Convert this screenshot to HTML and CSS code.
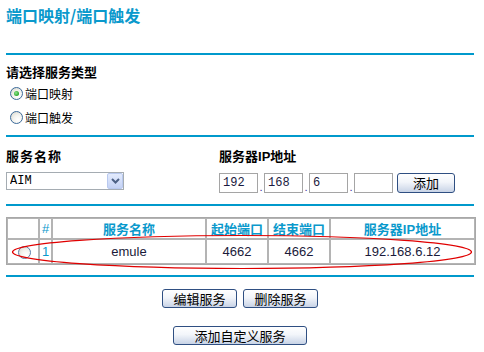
FILE: index.html
```html
<!DOCTYPE html>
<html lang="zh-CN">
<head>
    <meta charset="UTF-8">
    <title>端口映射/端口触发</title>
    <link rel="stylesheet" href="styles.css">
</head>
<body>
    <div class="page">
        <h1 class="title">端口映射/端口触发</h1>
        <div class="rule"></div>

        <!-- 服务类型 -->
        <div class="type-box">
            <div class="label">请选择服务类型</div>
            <div class="radio-row"><span class="radio checked"></span>端口映射</div>
            <div class="radio-row"><span class="radio"></span>端口触发</div>
        </div>
        <div class="rule gap-7"></div>

        <!-- 服务名称 / 服务器IP -->
        <div class="service-box">
            <div class="field name-field">
                <div class="label wide">服务名称</div>
                <div class="select-box">
                    <select class="select">
                        <option>AIM</option>
                    </select>
                    <span class="arrow">
                        <svg width="9" height="6" viewBox="0 0 9 6"><path d="M1 1 L4.5 4.5 L8 1" fill="none" stroke="#4d6185" stroke-width="2"/></svg>
                    </span>
                </div>
            </div>
            <div class="field">
                <div class="label">服务器<span class="latin">IP</span>地址</div>
                <div class="ip-row">
                    <input class="ip" type="text" value="192"><span class="dot">.</span>
                    <input class="ip" type="text" value="168"><span class="dot">.</span>
                    <input class="ip" type="text" value="6"><span class="dot">.</span>
                    <input class="ip" type="text" value="">
                    <button class="btn add-btn">添加</button>
                </div>
            </div>
        </div>
        <div class="rule gap-11"></div>

        <!-- 服务列表 -->
        <div class="table-wrap">
            <table class="list">
                <tr>
                    <th class="c1"></th>
                    <th class="c2">#</th>
                    <th class="c3">服务名称</th>
                    <th class="c4">起始端口</th>
                    <th class="c5">结束端口</th>
                    <th class="c6">服务器<span class="latin">IP</span>地址</th>
                </tr>
                <tr>
                    <td><span class="radio small"></span></td>
                    <td class="num">1</td>
                    <td>emule</td>
                    <td>4662</td>
                    <td>4662</td>
                    <td>192.168.6.12</td>
                </tr>
            </table>
            <svg class="mark" width="468" height="60" viewBox="0 0 468 60">
                <ellipse cx="236" cy="35" rx="229.5" ry="16.5" fill="none" stroke="#e00000" stroke-width="1.2"/>
            </svg>
        </div>
        <div class="rule gap-10"></div>

        <div class="actions">
            <button class="btn act-btn">编辑服务</button>
            <button class="btn act-btn">删除服务</button>
        </div>
        <div class="actions second">
            <button class="btn wide-btn">添加自定义服务</button>
        </div>
    </div>
</body>
</html>
```

FILE: styles.css
```css
* {
    margin: 0;
    padding: 0;
    box-sizing: border-box;
}

body {
    font-family: "Noto Sans CJK SC", "Liberation Sans", sans-serif;
    font-size: 13px;
    color: #000;
    background-color: #fff;
}

.page {
    width: 484px;
    padding: 0 10px 0 6px;
}

.title {
    padding-top: 5px;
    margin-bottom: 28px;
    font-size: 16px;
    line-height: 20px;
    font-weight: bold;
    color: #0a99cc;
}

.rule {
    height: 2px;
    background-color: #0099cc;
}

.gap-7 {
    margin-top: 7px;
}

.gap-10 {
    margin-top: 10px;
}

.gap-11 {
    margin-top: 11px;
}

.label {
    font-size: 13px;
    line-height: 16px;
    font-weight: bold;
}

.label.wide {
    letter-spacing: 1px;
}

.latin {
    font-family: "Liberation Sans", sans-serif;
}

/* 服务类型 */
.type-box {
    padding-top: 8px;
}

.type-box .label {
    line-height: 17px;
}

.radio-row {
    display: flex;
    align-items: center;
    height: 22px;
    margin-top: 2px;
    padding-left: 4px;
    font-size: 12px;
}

.radio {
    display: inline-block;
    position: relative;
    width: 13px;
    height: 13px;
    margin-right: 2px;
    border: 1px solid #3b6a9a;
    border-radius: 50%;
    background: radial-gradient(circle at 65% 70%, #ffffff 0%, #f3f3ef 45%, #d6d4c8 100%);
}

.radio.checked::after {
    content: "";
    position: absolute;
    left: 3px;
    top: 3px;
    width: 5px;
    height: 5px;
    border-radius: 50%;
    background: radial-gradient(circle at 40% 40%, #8ee68e 0%, #2aa52a 70%);
}

.radio.small {
    width: 13px;
    height: 13px;
    margin: 0 0 0 2px;
    vertical-align: middle;
    border-color: #5a7da8;
}

/* 服务名称 / IP */
.service-box {
    display: flex;
    padding-top: 11px;
}

.field .label {
    margin-bottom: 8px;
}

.name-field {
    width: 213px;
}

.select-box {
    display: flex;
    align-items: center;
    width: 118px;
    height: 18px;
    border: 1px solid #a5acb2;
    background-color: #fff;
}

.select {
    flex: 1;
    min-width: 0;
    height: 16px;
    padding-left: 3px;
    border: none;
    outline: none;
    background: transparent;
    appearance: none;
    font-family: "Liberation Mono", monospace;
    font-size: 12px;
    color: #000;
}

.arrow {
    display: flex;
    align-items: center;
    justify-content: center;
    width: 16px;
    height: 16px;
    border: 1px solid #b9c9ef;
    border-radius: 2px;
    background: linear-gradient(to bottom, #e3ebfd, #c4d2f5);
}

.ip-row {
    display: flex;
    align-items: flex-end;
    height: 20px;
}

.ip {
    width: 39px;
    height: 20px;
    padding-left: 3px;
    border: 1px solid #a5a5a5;
    font-family: "Liberation Mono", monospace;
    font-size: 12px;
    color: #1a1a40;
    outline: none;
}

.dot {
    width: 6px;
    text-align: center;
    font-family: "Liberation Sans", sans-serif;
    font-size: 11px;
    line-height: 12px;
    color: #3a2a9a;
}

.btn {
    height: 19px;
    border: 1px solid #2f4f82;
    border-radius: 3px;
    background: linear-gradient(to bottom, #ffffff 0%, #f2f5fa 45%, #c8d3e6 100%);
    font-family: "Noto Sans CJK SC", sans-serif;
    font-size: 13px;
    line-height: 16px;
    color: #000;
    cursor: pointer;
}

.add-btn {
    width: 58px;
    height: 20px;
    margin-left: 4px;
}

/* 列表 */
.table-wrap {
    position: relative;
    margin-top: 11px;
}

.list {
    width: 468px;
    table-layout: fixed;
    border-collapse: separate;
    border-spacing: 0;
    border: 1px solid #a8a8a8;
}

.list th,
.list td {
    border: 1px solid #b4b4b4;
    text-align: center;
    padding: 0;
}

.list th {
    height: 21px;
    font-size: 13px;
    font-weight: bold;
    color: #0a99cc;
}

.list td {
    height: 25px;
    font-family: "Liberation Sans", sans-serif;
    font-size: 13px;
    color: #1a1a3a;
}

.list td.num {
    color: #0a99cc;
    text-align: left;
    padding-left: 2px;
}

.list th.c2 {
    font-family: "Liberation Sans", sans-serif;
    font-weight: normal;
}

.c1 { width: 32px; }
.c2 { width: 13px; }
.c3 { width: 154px; }
.c4 { width: 62px; }
.c5 { width: 62px; }
.c6 { width: 145px; }

.mark {
    position: absolute;
    left: 0;
    top: 0;
    overflow: visible;
    pointer-events: none;
}

/* 按钮 */
.actions {
    display: flex;
    justify-content: center;
    gap: 6px;
    margin-top: 12px;
}

.actions.second {
    margin-top: 18px;
}

.act-btn {
    width: 75px;
}

.wide-btn {
    width: 134px;
}
```
